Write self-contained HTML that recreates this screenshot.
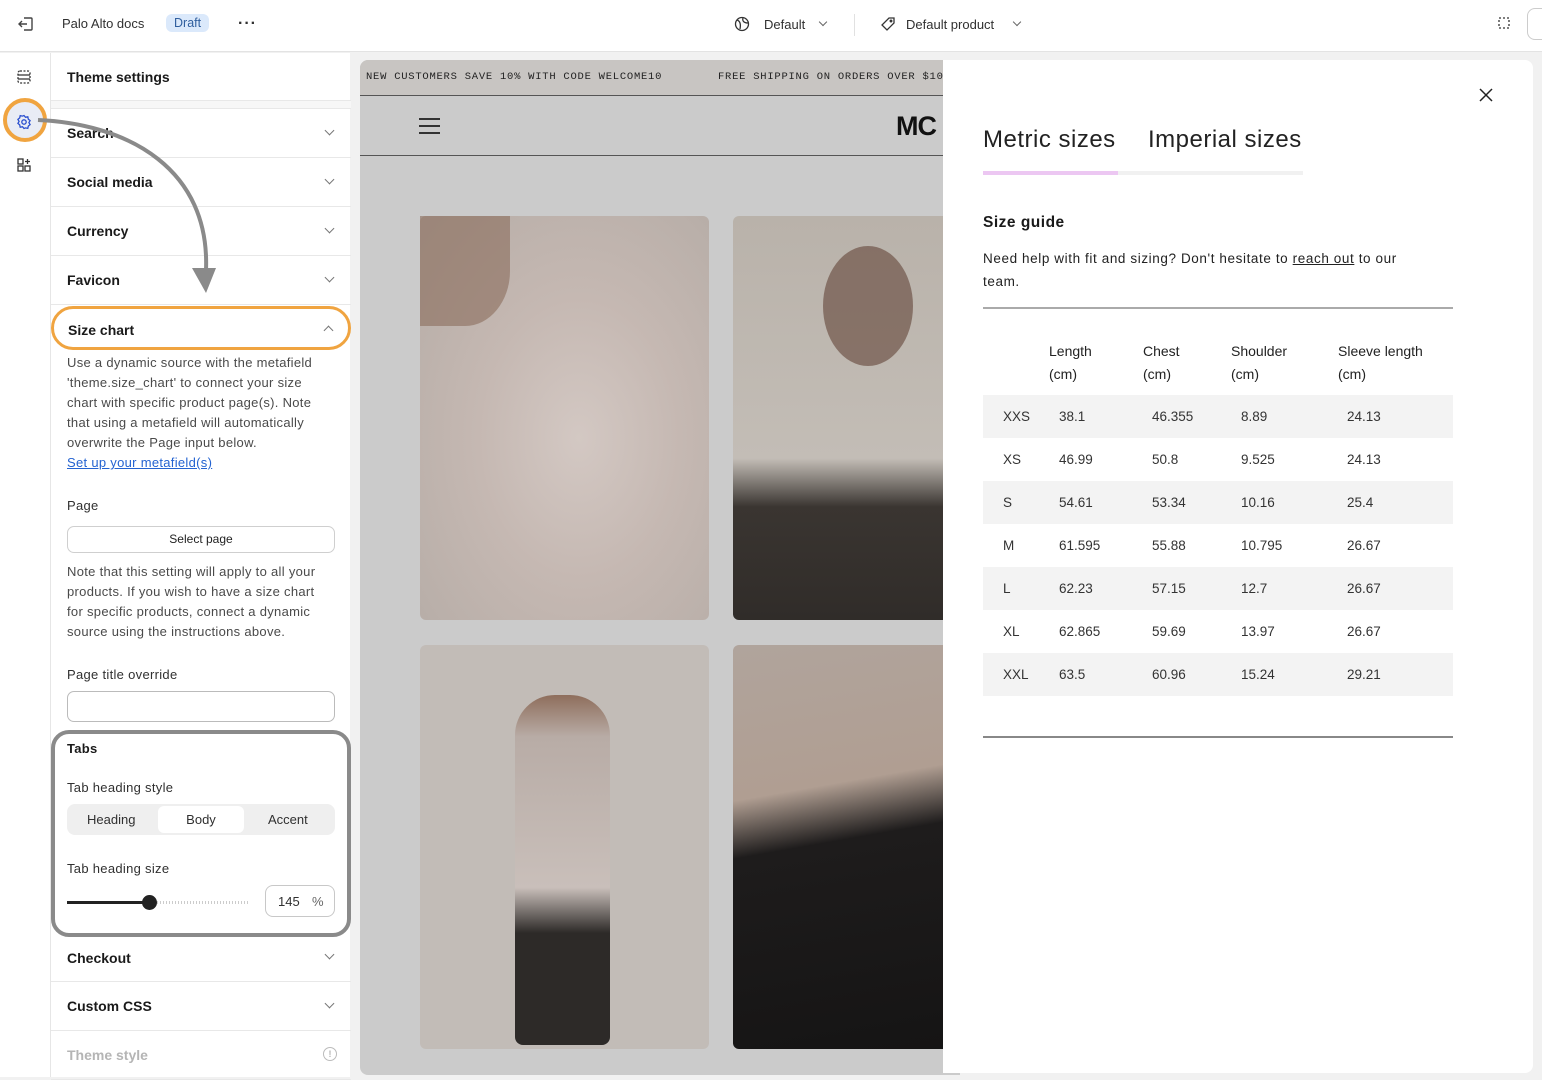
<!DOCTYPE html>
<html><head><meta charset="utf-8">
<style>
*{box-sizing:border-box;margin:0;padding:0}
body{width:1542px;height:1077px;overflow:hidden;background:#f1f1f1;font-family:"Liberation Sans",sans-serif;color:#303030;position:relative}
.abs{position:absolute}
.top{left:0;top:0;width:1542px;height:52px;background:#fff;border-bottom:1px solid #e3e3e3}
.top span{position:absolute;font-size:13px;color:#303030}
.rail{left:0;top:53px;width:50px;height:1024px;background:#fff}
.panel{left:50px;top:53px;width:300px;height:1024px;background:#fff;border-left:1px solid #e6e6e6}
.row{position:absolute;left:0;width:300px;height:49px;border-bottom:1px solid #e8e8e8;font-weight:bold;font-size:14px;color:#1a1a1a}
.row b{position:absolute;left:16px;top:16px}
.chev{position:absolute;right:18px;top:18px;width:7px;height:7px;border-right:1.3px solid #777;border-bottom:1.3px solid #777;transform:rotate(45deg)}
.txt{position:absolute;left:16px;font-size:13px;line-height:20px;color:#4a4a4a;letter-spacing:.3px}
.preview{left:360px;top:60px;width:600px;height:1015px;background:#cbcbcb;border-radius:8px 0 0 8px;overflow:hidden}
.drawer{left:943px;top:60px;width:590px;height:1013px;background:#fff;border-radius:0 8px 8px 0}
.dt{position:absolute;font-size:14px;color:#222}
.tr{position:absolute;left:40px;width:470px;height:43px}
.tr span{position:absolute;top:14px;font-size:13.5px;color:#333}
</style></head><body>
<div class="abs top">
<svg class="abs" style="left:17px;top:15px" width="18" height="18" viewBox="0 0 18 18" fill="none" stroke="#444" stroke-width="1.4"><path d="M7 3h7a1 1 0 0 1 1 1v10a1 1 0 0 1-1 1H7M10 9H2M5 6L2 9l3 3"/></svg>
<span style="left:62px;top:16px">Palo Alto docs</span>
<span style="left:166px;top:14px;background:#dbe9fb;color:#2f5e9e;padding:2px 8px;border-radius:6px;font-size:12.5px">Draft</span>
<span style="left:238px;top:15px;font-size:16px;font-weight:bold;letter-spacing:1px">···</span>
<svg class="abs" style="left:734px;top:16px" width="16" height="16" viewBox="0 0 16 16" fill="none" stroke="#333" stroke-width="1.3"><circle cx="8" cy="8" r="6.5"/><path d="M3 4c3 1 4 4 3 9M9 2c-1 3 1 5 5 5"/></svg>
<span style="left:764px;top:17px">Default</span>
<div class="abs" style="left:820px;top:19px;width:6px;height:6px;border-right:1.2px solid #666;border-bottom:1.2px solid #666;transform:rotate(45deg)"></div>
<div class="abs" style="left:854px;top:14px;width:1px;height:22px;background:#e1e1e1"></div>
<svg class="abs" style="left:880px;top:16px" width="16" height="16" viewBox="0 0 16 16" fill="none" stroke="#333" stroke-width="1.3"><path d="M9 2h5v5l-7 7-5-5z"/><circle cx="11" cy="5" r="0.8"/></svg>
<span style="left:906px;top:17px">Default product</span>
<div class="abs" style="left:1014px;top:19px;width:6px;height:6px;border-right:1.2px solid #666;border-bottom:1.2px solid #666;transform:rotate(45deg)"></div>
<svg class="abs" style="left:1497px;top:16px" width="16" height="16" viewBox="0 0 16 16" fill="none" stroke="#333" stroke-width="1.3" stroke-dasharray="2 2"><rect x="2" y="2" width="10" height="10"/></svg>
<div class="abs" style="left:1527px;top:8px;width:30px;height:32px;border:1px solid #ccc;border-radius:8px"></div>
</div>
<div class="abs rail">
<svg class="abs" style="left:16px;top:16px" width="16" height="16" viewBox="0 0 16 16" fill="none" stroke="#333" stroke-width="1.3"><rect x="2" y="2" width="12" height="12" rx="2" stroke-dasharray="2 1.5"/><path d="M2 6h12M2 10h12"/></svg>
<div class="abs" style="left:3px;top:45px;width:44px;height:44px;border-radius:50%;border:4px solid #f0a440;background:#e9ecf5"></div>
<svg class="abs" style="left:16px;top:61px" width="16" height="16" viewBox="0 0 16 16" fill="none" stroke="#2b4fcf" stroke-width="1.3"><circle cx="8" cy="8" r="2.2"/><path d="M8 1.5l1.5 1.8 2.3-.5.5 2.3 1.8 1.5-1.2 2 1.2 2-1.8 1.5-.5 2.3-2.3-.5L8 14.5l-1.5-1.8-2.3.5-.5-2.3-1.8-1.5 1.2-2-1.2-2 1.8-1.5.5-2.3 2.3.5z"/></svg>
<svg class="abs" style="left:16px;top:104px" width="16" height="16" viewBox="0 0 16 16" fill="none" stroke="#333" stroke-width="1.3"><rect x="2" y="2" width="5" height="5"/><rect x="2" y="9" width="5" height="5"/><rect x="9" y="9" width="5" height="5"/><path d="M11.5 2v5M9 4.5h5"/></svg>
</div>
<div class="abs panel">
<div class="row" style="top:0;height:48px"><b style="top:16px">Theme settings</b></div>
<div class="abs" style="left:0;top:48px;width:300px;height:8px;background:#f7f7f7;border-bottom:1px solid #e8e8e8"></div>
<div class="row" style="top:56px"><b>Search</b><i class="chev"></i></div>
<div class="row" style="top:105px"><b>Social media</b><i class="chev"></i></div>
<div class="row" style="top:154px"><b>Currency</b><i class="chev"></i></div>
<div class="row" style="top:203px"><b>Favicon</b><i class="chev"></i></div>
<div class="row" style="top:253px;border:3px solid #f0a440;border-radius:22px;height:44px;left:0"><b style="left:14px;top:13px">Size chart</b><i class="chev" style="transform:rotate(-135deg);top:18px;right:16px"></i></div>
<div class="txt" style="top:300px;width:262px">Use a dynamic source with the metafield 'theme.size_chart' to connect your size chart with specific product page(s). Note that using a metafield will automatically overwrite the Page input below.<br><span style="color:#2463d1;text-decoration:underline">Set up your metafield(s)</span></div>
<div class="txt" style="top:443px;color:#303030">Page</div>
<div class="abs" style="left:16px;top:473px;width:268px;height:27px;border:1px solid #cfcfcf;border-radius:7px;font-size:12px;text-align:center;line-height:25px;color:#222">Select page</div>
<div class="txt" style="top:509px;width:262px">Note that this setting will apply to all your products. If you wish to have a size chart for specific products, connect a dynamic source using the instructions above.</div>
<div class="txt" style="top:612px;color:#303030">Page title override</div>
<div class="abs" style="left:16px;top:638px;width:268px;height:31px;border:1px solid #bbb;border-radius:7px"></div>
<div class="abs" style="left:0;top:677px;width:300px;height:207px;border:4px solid #8a8a8a;border-radius:18px"></div>
<div class="txt" style="top:686px;color:#1a1a1a;font-weight:bold">Tabs</div>
<div class="txt" style="top:725px;color:#303030">Tab heading style</div>
<div class="abs" style="left:16px;top:751px;width:268px;height:31px;background:#efefef;border-radius:8px;font-size:13px">
<span class="abs" style="left:20px;top:8px">Heading</span>
<div class="abs" style="left:91px;top:2px;width:86px;height:27px;background:#fff;border-radius:6px;text-align:center;line-height:27px">Body</div>
<span class="abs" style="left:201px;top:8px">Accent</span></div>
<div class="txt" style="top:806px;color:#303030">Tab heading size</div>
<div class="abs" style="left:16px;top:848px;width:84px;height:3px;background:#222"></div>
<div class="abs" style="left:100px;top:848px;width:98px;height:3px;background:repeating-linear-gradient(90deg,#ccc 0 1px,transparent 1px 3px)"></div>
<div class="abs" style="left:91px;top:842px;width:15px;height:15px;border-radius:50%;background:#222"></div>
<div class="abs" style="left:214px;top:832px;width:70px;height:32px;border:1px solid #c8c8c8;border-radius:8px;font-size:13px"><span class="abs" style="left:12px;top:8px">145</span><span class="abs" style="left:46px;top:8px;color:#666">%</span></div>
<div class="row" style="top:880px"><b style="top:17px">Checkout</b><i class="chev"></i></div>
<div class="row" style="top:929px"><b>Custom CSS</b><i class="chev"></i></div>
<div class="row" style="top:978px;color:#b5b5b5"><b>Theme style</b><span class="abs" style="right:14px;top:16px;width:14px;height:14px;border:1px solid #bbb;border-radius:50%;font-size:9px;text-align:center;line-height:12px">!</span></div>
</div>
<svg class="abs" style="left:30px;top:110px" width="200" height="190" viewBox="0 0 200 190" fill="none"><path d="M8 10 C100 14 180 60 176 160" stroke="#8a8a8a" stroke-width="4"/><path d="M162 158 L186 158 L176 183 Z" fill="#8a8a8a"/></svg>
<div class="abs preview">
<div class="abs" style="left:0;top:0;width:600px;height:36px;background:#c8c5c2;border-bottom:1.5px solid #555;font-family:'Liberation Mono',monospace;font-size:10.5px;color:#222;letter-spacing:0.75px;white-space:nowrap"><span class="abs" style="left:6px;top:11px">NEW CUSTOMERS SAVE 10% WITH CODE WELCOME10</span><span class="abs" style="left:358px;top:11px">FREE SHIPPING ON ORDERS OVER $100</span></div>
<div class="abs" style="left:0;top:36px;width:600px;height:60px;border-bottom:1.5px solid #555"></div>
<div class="abs" style="left:59px;top:58px;width:21px;height:2px;background:#333;box-shadow:0 7px 0 #333,0 14px 0 #333"></div>
<div class="abs" style="left:536px;top:51px;font-size:27px;font-weight:900;color:#111;letter-spacing:-1px">MC</div>
<div class="abs" style="left:60px;top:156px;width:289px;height:404px;border-radius:6px;background:radial-gradient(ellipse at 55% 55%,#d3c8c3 0,#c5b8b2 45%,#b5aca6 100%)"><div class="abs" style="left:0;top:0;width:90px;height:110px;border-radius:0 0 50% 0;background:#8a6c5c;opacity:.6"></div></div>
<div class="abs" style="left:373px;top:156px;width:240px;height:404px;border-radius:6px;background:linear-gradient(180deg,#b9b2aa 0,#c3bdb6 60%,#3a3531 72%,#302c29 100%)"><div class="abs" style="left:90px;top:30px;width:90px;height:120px;border-radius:50%;background:#6f5448;opacity:.7"></div></div>
<div class="abs" style="left:60px;top:585px;width:289px;height:404px;border-radius:6px;background:#c2bcb7"><div class="abs" style="left:95px;top:50px;width:95px;height:350px;background:linear-gradient(180deg,#8e6e5c 0,#b8aca6 12%,#c9bfba 55%,#2d2a28 68%,#2d2a28 100%);border-radius:40px 40px 8px 8px"></div></div>
<div class="abs" style="left:373px;top:585px;width:240px;height:404px;border-radius:6px;background:linear-gradient(170deg,#b0a49c 0,#b09e92 35%,#1e1c1c 48%,#151414 100%)"></div>
</div>
<div class="abs drawer">
<svg class="abs" style="left:536px;top:28px" width="14" height="14" viewBox="0 0 14 14" stroke="#222" stroke-width="1.5"><path d="M1 1l12 12M13 1L1 13"/></svg>
<div class="abs" style="left:40px;top:66px;font-size:24px;font-weight:300;color:#222;letter-spacing:.5px">Metric sizes</div>
<div class="abs" style="left:205px;top:66px;font-size:24px;font-weight:300;color:#222;letter-spacing:.5px">Imperial sizes</div>
<div class="abs" style="left:40px;top:111px;width:320px;height:4px;background:#f1f1f1"></div>
<div class="abs" style="left:40px;top:111px;width:135px;height:4px;background:#ecc7f2"></div>
<div class="abs" style="left:40px;top:154px;font-size:15.5px;font-weight:bold;color:#1a1a1a;letter-spacing:.5px">Size guide</div>
<div class="abs" style="left:40px;top:187px;width:436px;font-size:13.5px;line-height:23px;color:#222;letter-spacing:.6px">Need help with fit and sizing? Don't hesitate to <u>reach out</u> to our team.</div>
<div class="abs" style="left:40px;top:247px;width:470px;height:2px;background:#aaa"></div>
<div class="dt" style="left:106px;top:280px;line-height:23px">Length<br>(cm)</div>
<div class="dt" style="left:200px;top:280px;line-height:23px">Chest<br>(cm)</div>
<div class="dt" style="left:288px;top:280px;line-height:23px">Shoulder<br>(cm)</div>
<div class="dt" style="left:395px;top:280px;line-height:23px">Sleeve length<br>(cm)</div>
<div class="tr" style="top:335px;background:#f3f3f3"><span style="left:20px">XXS</span><span style="left:76px">38.1</span><span style="left:169px">46.355</span><span style="left:258px">8.89</span><span style="left:364px">24.13</span></div>
<div class="tr" style="top:378px"><span style="left:20px">XS</span><span style="left:76px">46.99</span><span style="left:169px">50.8</span><span style="left:258px">9.525</span><span style="left:364px">24.13</span></div>
<div class="tr" style="top:421px;background:#f3f3f3"><span style="left:20px">S</span><span style="left:76px">54.61</span><span style="left:169px">53.34</span><span style="left:258px">10.16</span><span style="left:364px">25.4</span></div>
<div class="tr" style="top:464px"><span style="left:20px">M</span><span style="left:76px">61.595</span><span style="left:169px">55.88</span><span style="left:258px">10.795</span><span style="left:364px">26.67</span></div>
<div class="tr" style="top:507px;background:#f3f3f3"><span style="left:20px">L</span><span style="left:76px">62.23</span><span style="left:169px">57.15</span><span style="left:258px">12.7</span><span style="left:364px">26.67</span></div>
<div class="tr" style="top:550px"><span style="left:20px">XL</span><span style="left:76px">62.865</span><span style="left:169px">59.69</span><span style="left:258px">13.97</span><span style="left:364px">26.67</span></div>
<div class="tr" style="top:593px;background:#f3f3f3"><span style="left:20px">XXL</span><span style="left:76px">63.5</span><span style="left:169px">60.96</span><span style="left:258px">15.24</span><span style="left:364px">29.21</span></div>
<div class="abs" style="left:40px;top:676px;width:470px;height:1.5px;background:#888"></div>
</div>
</body></html>
